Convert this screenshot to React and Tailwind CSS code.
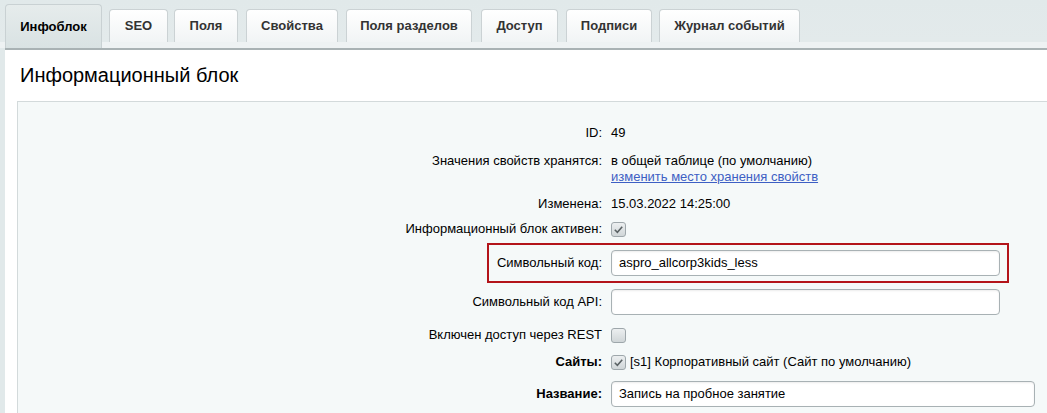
const tabs = [
    {name: 'Инфоблок', w: 'w-[97px]', ml: 'ml-0', active: true},
    {name: 'SEO', w: 'w-[59px]', ml: 'ml-[7px]'},
    {name: 'Поля', w: 'w-[64px]', ml: 'ml-[6px]'},
    {name: 'Свойства', w: 'w-[92px]', ml: 'ml-[8px]'},
    {name: 'Поля разделов', w: 'w-[126px]', ml: 'ml-[8px]'},
    {name: 'Доступ', w: 'w-[77px]', ml: 'ml-[9px]'},
    {name: 'Подписи', w: 'w-[86px]', ml: 'ml-[8px]'},
    {name: 'Журнал событий', w: 'w-[141px]', ml: 'ml-[7px]'},
]

function Checkbox({checked}) {
    return (
        <span
            className="inline-flex h-[15px] w-[15px] items-center justify-center rounded-[3px] border border-[#9ea7ab] bg-[linear-gradient(to_bottom,#eceff0,#d0d6d8)]">
            {checked && (
                <svg viewBox="0 0 14 14" className="h-[13px] w-[13px]">
                    <path d="M3 7.2 L5.8 10 L11 4" fill="none" stroke="#5a6264" strokeWidth="1.7"/>
                </svg>
            )}
        </span>
    )
}

function Row({label, bold, className, children}) {
    return (
        <div className={`flex items-center ${className}`}>
            <div className={`w-[584px] shrink-0 text-right ${bold ? 'font-bold' : ''}`}>{label}</div>
            <div className="ml-[9px] flex min-w-0 flex-1 items-center">{children}</div>
        </div>
    )
}

function TextInput({value, w}) {
    return (
        <div
            className={`${w} flex h-[26px] items-center rounded-[4px] border border-[#a8b1b4] bg-white px-[7px] shadow-[inset_0_1px_2px_rgba(0,0,0,0.08)]`}>
            {value}
        </div>
    )
}

export default function App() {
    return (
        <div className="min-h-[413px] bg-[#e1e9ea] text-[13px] text-black"
             style={{fontFamily: '"Liberation Sans", Arial, sans-serif'}}>
            <div
                className="flex h-[48px] items-end pl-[5px] bg-[linear-gradient(to_bottom,#e1e9ea_0px,#e3eaeb_42px,#eef2f3_42px)]">
                {tabs.map((tab) => (
                    tab.active ? (
                        <div key={tab.name}
                             className={`${tab.w} ${tab.ml} flex h-[44px] shrink-0 items-center justify-center rounded-t-[4px] border border-b-0 border-[#c9d1d3] bg-[linear-gradient(to_bottom,#e6ecec,#d9e2e3)] font-bold text-black`}>
                            {tab.name}
                        </div>
                    ) : (
                        <div key={tab.name}
                             className={`${tab.w} ${tab.ml} mb-[6px] flex h-[33px] shrink-0 items-center justify-center rounded-t-[4px] border border-b-0 border-[#cbd2d4] bg-[linear-gradient(to_bottom,#ffffff,#f1f4f5)] font-bold text-[#333]`}>
                            {tab.name}
                        </div>
                    )
                ))}
            </div>

            <div className="ml-[5px] border-t-2 border-[#a9b2b4] bg-white">
                <h1 className="pl-[15px] pt-[13px] text-[20px] leading-[24px] font-normal">Информационный блок</h1>

                <div className="ml-[12px] mt-[14px] border-l border-t border-[#d3dadb] bg-[#f5f9f9] pt-[20px] pb-[8px]">
                    <Row label="ID:" className="h-[22px]">49</Row>

                    <div className="flex pt-[9px] pb-[7px] leading-[16px]">
                        <div className="w-[584px] shrink-0 text-right">Значения свойств хранятся:</div>
                        <div className="ml-[9px]">
                            <div>в общей таблице (по умолчанию)</div>
                            <a href="#" className="text-[#3d5fc4] underline">изменить место хранения свойств</a>
                        </div>
                    </div>

                    <Row label="Изменена:" className="h-[23px]">15.03.2022 14:25:00</Row>
                    <Row label="Информационный блок активен:" className="h-[28px]"><Checkbox checked/></Row>

                    <div className="relative">
                        <Row label="Символьный код:" className="h-[40px]">
                            <TextInput value="aspro_allcorp3kids_less" w="w-[389px]"/>
                        </Row>
                        <div
                            className="pointer-events-none absolute left-[469px] top-0 h-[40px] w-[522px] border-2 border-[#b3141a]"/>
                    </div>

                    <Row label="Символьный код API:" className="h-[38px]">
                        <TextInput value="" w="w-[389px]"/>
                    </Row>
                    <Row label="Включен доступ через REST" className="h-[28px]"><Checkbox/></Row>
                    <Row label="Сайты:" bold className="h-[26px]">
                        <Checkbox checked/>
                        <span className="ml-[4px]">[s1] Корпоративный сайт (Сайт по умолчанию)</span>
                    </Row>
                    <Row label="Название:" bold className="h-[38px]">
                        <TextInput value="Запись на пробное занятие" w="w-[424px]"/>
                    </Row>
                </div>
            </div>
        </div>
    )
}
